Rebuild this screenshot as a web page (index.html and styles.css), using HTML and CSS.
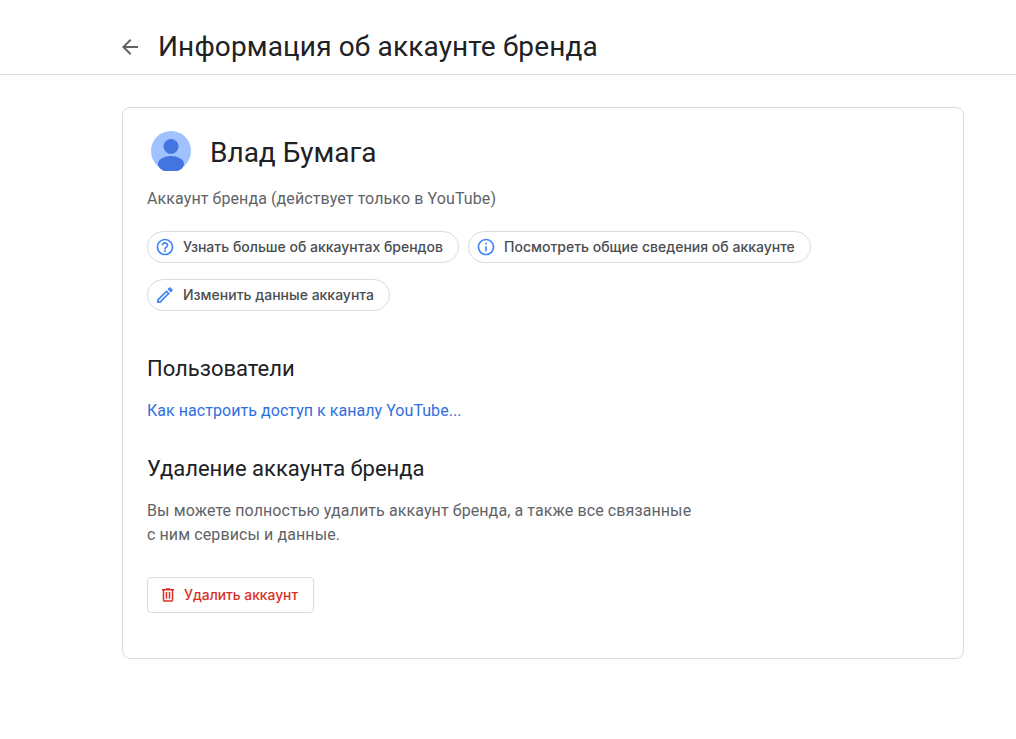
FILE: index.html
```html
<!DOCTYPE html>
<html lang="ru">
<head>
<meta charset="utf-8">
<title>Информация об аккаунте бренда</title>
<link rel="stylesheet" href="styles.css">
</head>
<body>
<header class="topbar">
  <svg class="back" viewBox="0 0 24 24" width="24" height="24"><path d="M20 11H7.83l5.59-5.59L12 4l-8 8 8 8 1.41-1.41L7.83 13H20z"/></svg>
  <h1 class="page-title">Информация об аккаунте бренда</h1>
</header>
<main class="card">
  <div class="identity">
    <svg class="avatar" viewBox="0 0 40 40" width="40" height="40">
      <circle cx="20" cy="20" r="20" fill="#a0c3ff"/>
      <circle cx="20" cy="15.5" r="7.5" fill="#4374e0"/>
      <ellipse cx="20" cy="33" rx="13" ry="8" fill="#4374e0"/>
    </svg>
    <div class="name">Влад Бумага</div>
  </div>
  <p class="subtitle">Аккаунт бренда (действует только в YouTube)</p>
  <div class="chips">
    <a class="chip">
      <svg viewBox="0 0 24 24" width="20" height="20"><path d="M11 18h2v-2h-2v2zm1-16C6.48 2 2 6.48 2 12s4.48 10 10 10 10-4.48 10-10S17.52 2 12 2zm0 18c-4.41 0-8-3.59-8-8s3.59-8 8-8 8 3.59 8 8-3.59 8-8 8zm0-14c-2.21 0-4 1.79-4 4h2c0-1.1.9-2 2-2s2 .9 2 2c0 2-3 1.75-3 5h2c0-2.25 3-2.5 3-5 0-2.21-1.79-4-4-4z"/></svg>
      <span>Узнать больше об аккаунтах брендов</span>
    </a>
    <a class="chip">
      <svg viewBox="0 0 24 24" width="20" height="20"><path d="M11 7h2v2h-2zm0 4h2v6h-2zm1-9C6.48 2 2 6.48 2 12s4.48 10 10 10 10-4.48 10-10S17.52 2 12 2zm0 18c-4.41 0-8-3.59-8-8s3.59-8 8-8 8 3.59 8 8-3.59 8-8 8z"/></svg>
      <span>Посмотреть общие сведения об аккаунте</span>
    </a>
    <a class="chip">
      <svg viewBox="0 0 24 24" width="20" height="20"><path d="M2.5 17.5V21.5h4L17.8 10.2l-4-4L2.5 17.5zM5.6 19.5H4.5v-1.1L13.8 9l1.1 1.1L5.6 19.5zM21 7a1.1 1.1 0 0 0 0-1.5l-2.5-2.5a1.1 1.1 0 0 0-1.5 0L15 5l4 4 2-2z"/></svg>
      <span>Изменить данные аккаунта</span>
    </a>
  </div>
  <section class="users">
    <h2 class="section-title">Пользователи</h2>
    <a class="link">Как настроить доступ к каналу YouTube...</a>
  </section>
  <section class="removal">
    <h2 class="section-title">Удаление аккаунта бренда</h2>
    <p class="desc">Вы можете полностью удалить аккаунт бренда, а также все связанные<br>с ним сервисы и данные.</p>
    <button class="delete" type="button">
      <svg viewBox="0 0 24 24" width="18" height="18"><path d="M15 4V3H9v1H4v2h1v13c0 1.1.9 2 2 2h10c1.1 0 2-.9 2-2V6h1V4h-5zm2 15H7V6h10v13zM9 8h2v9H9zm4 0h2v9h-2z"/></svg>
      <span>Удалить аккаунт</span>
    </button>
  </section>
</main>
</body>
</html>
```
FILE: styles.css
```css
* { box-sizing: border-box; }
html, body { margin: 0; padding: 0; }
body {
  background: #fff;
  color: #202124;
  font-family: Roboto, "Noto Sans", sans-serif;
  height: 739px;
  overflow: hidden;
}
.topbar {
  height: 75px;
  border-bottom: 1px solid #dadce0;
  display: flex;
  align-items: center;
  gap: 16px;
  padding: 20px 0 0 118px;
}
.back { fill: #5f6368; flex: none; }
.page-title { margin: 0; font-size: 28px; font-weight: 400; line-height: 36px; letter-spacing: 0.14px; color: #202124; }
.card {
  width: 842px;
  height: 552px;
  margin: 32px 0 0 122px;
  border: 1px solid #dadce0;
  border-radius: 8px;
  padding: 23px 24px 0;
}
.identity { display: flex; align-items: center; gap: 19px; margin-left: 4px; height: 40px; }
.name { font-size: 28px; line-height: 36px; padding-top: 3px; color: #202124; }
.subtitle { margin: 16px 0 0; font-size: 16px; line-height: 24px; letter-spacing: 0.1px; color: #5f6368; }
.chips { display: flex; flex-wrap: wrap; gap: 16px 9px; margin-top: 20px; width: 700px; }
.chip {
  height: 32px;
  border: 1px solid #dadce0;
  border-radius: 16px;
  display: flex;
  align-items: center;
  gap: 8px;
  padding: 0 15px 0 7px;
  font-family: Inter, Roboto, sans-serif;
  font-size: 14px;
  font-weight: 500;
  color: #4a4d51;
}
.chip span { margin-bottom: 2px; }
.chip svg { fill: #4285f4; flex: none; }
.section-title { margin: 0; font-size: 22px; font-weight: 400; line-height: 28px; color: #202124; }
.users { margin-top: 44px; }
.link { display: block; margin-top: 16px; font-size: 16px; line-height: 24px; letter-spacing: 0.05px; color: #2f6fe0; }
.removal { margin-top: 32px; }
.desc { margin: 16px 0 0; font-size: 16px; line-height: 24px; letter-spacing: 0.1px; color: #5f6368; }
.delete {
  margin-top: 30px;
  width: 167px;
  height: 36px;
  background: #fff;
  border: 1px solid #dadce0;
  border-radius: 4px;
  display: flex;
  align-items: center;
  gap: 7px;
  padding: 0 0 0 11px;
  font-family: Inter, Roboto, sans-serif;
  font-size: 13.8px;
  font-weight: 500;
  color: #d93025;
}
.delete svg { fill: #d93025; flex: none; }
```
